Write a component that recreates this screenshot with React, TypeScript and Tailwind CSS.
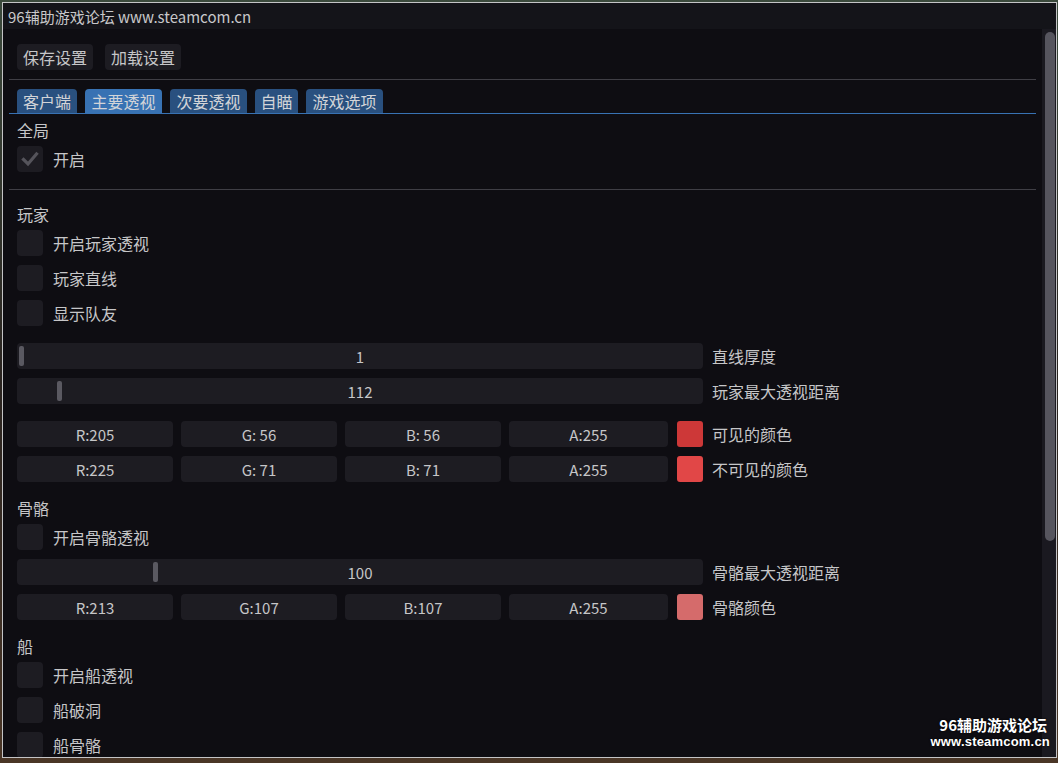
import React from 'react';

const font = { fontFamily: '"Noto Sans CJK SC", "Noto Sans", sans-serif' };

const Checkbox: React.FC<{ label: string; checked?: boolean; className?: string }> = ({ label, checked, className }) => (
    <div className={`flex items-center h-[26px] shrink-0 ${className || ''}`}>
        <div className="w-[26px] h-[26px] rounded-[4px] bg-[#1d1c22] flex items-center justify-center shrink-0">
            {checked && (
                <svg width="20" height="20" viewBox="0 0 20 20">
                    <path d="M3.5 10.5 L8 15 L16.5 5" fill="none" stroke="#55545b" strokeWidth="3.2" strokeLinecap="square" />
                </svg>
            )}
        </div>
        <span className="ml-[10px] text-[16px] text-[#c6c6c8] leading-none">{label}</span>
    </div>
);

const Heading: React.FC<{ text: string; className?: string }> = ({ text, className }) => (
    <div className={`h-[20px] shrink-0 flex items-center text-[16px] text-[#c6c6c8] leading-none ${className || ''}`}>{text}</div>
);

const Slider: React.FC<{ value: string; grab: string; label: string; className?: string }> = ({ value, grab, label, className }) => (
    <div className={`flex items-center h-[26px] shrink-0 ${className || ''}`}>
        <div className="relative w-[686px] h-[26px] rounded-[4px] bg-[#1d1c22] flex items-center justify-center shrink-0">
            <div className={`absolute top-[3px] bottom-[3px] w-[5px] rounded-[2px] bg-[#5a5961] ${grab}`} />
            <span className="text-[15px] text-[#c6c6c8] leading-none">{value}</span>
        </div>
        <span className="ml-[9px] text-[16px] text-[#c6c6c8] leading-none">{label}</span>
    </div>
);

const ColorRow: React.FC<{ r: string; g: string; b: string; a: string; swatch: string; label: string; className?: string }> = ({ r, g, b, a, swatch, label, className }) => {
    const box = 'h-[26px] rounded-[4px] bg-[#1d1c22] flex items-center justify-center text-[15px] text-[#c6c6c8] leading-none shrink-0';
    return (
        <div className={`flex items-center h-[26px] shrink-0 ${className || ''}`}>
            <div className={`${box} w-[156px]`}>{r}</div>
            <div className={`${box} w-[156px] ml-[8px]`}>{g}</div>
            <div className={`${box} w-[156px] ml-[8px]`}>{b}</div>
            <div className={`${box} w-[159px] ml-[8px]`}>{a}</div>
            <div className={`w-[26px] h-[26px] rounded-[3px] ml-[9px] shrink-0 ${swatch}`} />
            <span className="ml-[9px] text-[16px] text-[#c6c6c8] leading-none">{label}</span>
        </div>
    );
};

const tabs = [
    { name: '客户端', active: false, w: 'w-[60px]' },
    { name: '主要透视', active: true, w: 'w-[77px]' },
    { name: '次要透视', active: false, w: 'w-[77px]' },
    { name: '自瞄', active: false, w: 'w-[43px]' },
    { name: '游戏选项', active: false, w: 'w-[77px]' },
];

export default function App() {
    return (
        <div className="relative w-[1058px] h-[763px] overflow-hidden bg-gradient-to-b from-[#3b4a3c] via-[#2a2420] to-[#4a3626]" style={font}>
            <div className="absolute left-[2px] top-[2px] w-[1055px] h-[756px] border border-[#c4c4c6] bg-[#0e0d12] flex flex-col overflow-hidden">
                {/* title bar */}
                <div className="h-[26px] bg-[#141419] flex items-center pl-[5px] shrink-0">
                    <span className="text-[15px] text-[#c8c8ca] leading-none">96辅助游戏论坛 www.steamcom.cn</span>
                </div>

                <div className="flex flex-1 min-h-0">
                    {/* content */}
                    <div className="flex-1 flex flex-col pl-[6px] pr-[6px] overflow-hidden">
                        <div className="flex pl-[8px] mt-[15px] gap-[12px] shrink-0">
                            <button className="h-[26px] px-[6px] rounded-[4px] bg-[#1d1c22] text-[16px] text-[#c6c6c8] leading-none">保存设置</button>
                            <button className="h-[26px] px-[6px] rounded-[4px] bg-[#1d1c22] text-[16px] text-[#c6c6c8] leading-none">加载设置</button>
                        </div>

                        <div className="h-px shrink-0 bg-[#3f3e45] mt-[9px]" />

                        <div className="flex pl-[8px] mt-[9px] gap-[8px] shrink-0">
                            {tabs.map(t => (
                                <div
                                    key={t.name}
                                    className={`h-[24px] ${t.w} rounded-t-[4px] flex items-center justify-center text-[16px] leading-none text-[#d2d4d8] ${t.active ? 'bg-[#3872b3]' : 'bg-[#29507f]'}`}
                                >
                                    {t.name}
                                </div>
                            ))}
                        </div>
                        <div className="h-px shrink-0 bg-[#3872b3]" />

                        <div className="pl-[8px] flex flex-col shrink-0">
                            <Heading text="全局" className="mt-[6px]" />
                            <Checkbox label="开启" checked className="mt-[6px]" />
                        </div>

                        <div className="h-px shrink-0 bg-[#3f3e45] mt-[17px]" />

                        <div className="pl-[8px] flex flex-col shrink-0">
                            <Heading text="玩家" className="mt-[14px]" />
                            <Checkbox label="开启玩家透视" className="mt-[6px]" />
                            <Checkbox label="玩家直线" className="mt-[9px]" />
                            <Checkbox label="显示队友" className="mt-[9px]" />

                            <Slider value="1" grab="left-[2px]" label="直线厚度" className="mt-[17px]" />
                            <Slider value="112" grab="left-[40px]" label="玩家最大透视距离" className="mt-[9px]" />

                            <ColorRow r="R:205" g="G: 56" b="B: 56" a="A:255" swatch="bg-[#cd3838]" label="可见的颜色" className="mt-[17px]" />
                            <ColorRow r="R:225" g="G: 71" b="B: 71" a="A:255" swatch="bg-[#e14747]" label="不可见的颜色" className="mt-[9px]" />

                            <Heading text="骨骼" className="mt-[16px]" />
                            <Checkbox label="开启骨骼透视" className="mt-[6px]" />
                            <Slider value="100" grab="left-[136px]" label="骨骼最大透视距离" className="mt-[9px]" />
                            <ColorRow r="R:213" g="G:107" b="B:107" a="A:255" swatch="bg-[#d56b6b]" label="骨骼颜色" className="mt-[9px]" />

                            <Heading text="船" className="mt-[16px]" />
                            <Checkbox label="开启船透视" className="mt-[6px]" />
                            <Checkbox label="船破洞" className="mt-[9px]" />
                            <Checkbox label="船骨骼" className="mt-[9px]" />
                        </div>
                    </div>

                    {/* scrollbar */}
                    <div className="w-[14px] bg-[#1a1920] shrink-0 pt-[3px] pl-[3px] pr-[1px]">
                        <div className="h-[509px] rounded-full bg-[#56555e]" />
                    </div>
                </div>
            </div>

            {/* watermark */}
            <div className="absolute right-[8px] top-[717px] flex flex-col items-end text-white font-bold leading-none [text-shadow:0_0_2px_rgba(0,0,0,0.9)]">
                <span className="text-[15px] mr-[3px]">96辅助游戏论坛</span>
                <span className="text-[13px] mt-[3px] tracking-[0.2px]" style={{ fontFamily: '"Liberation Sans", "Noto Sans", sans-serif' }}>www.steamcom.cn</span>
            </div>
        </div>
    );
}
